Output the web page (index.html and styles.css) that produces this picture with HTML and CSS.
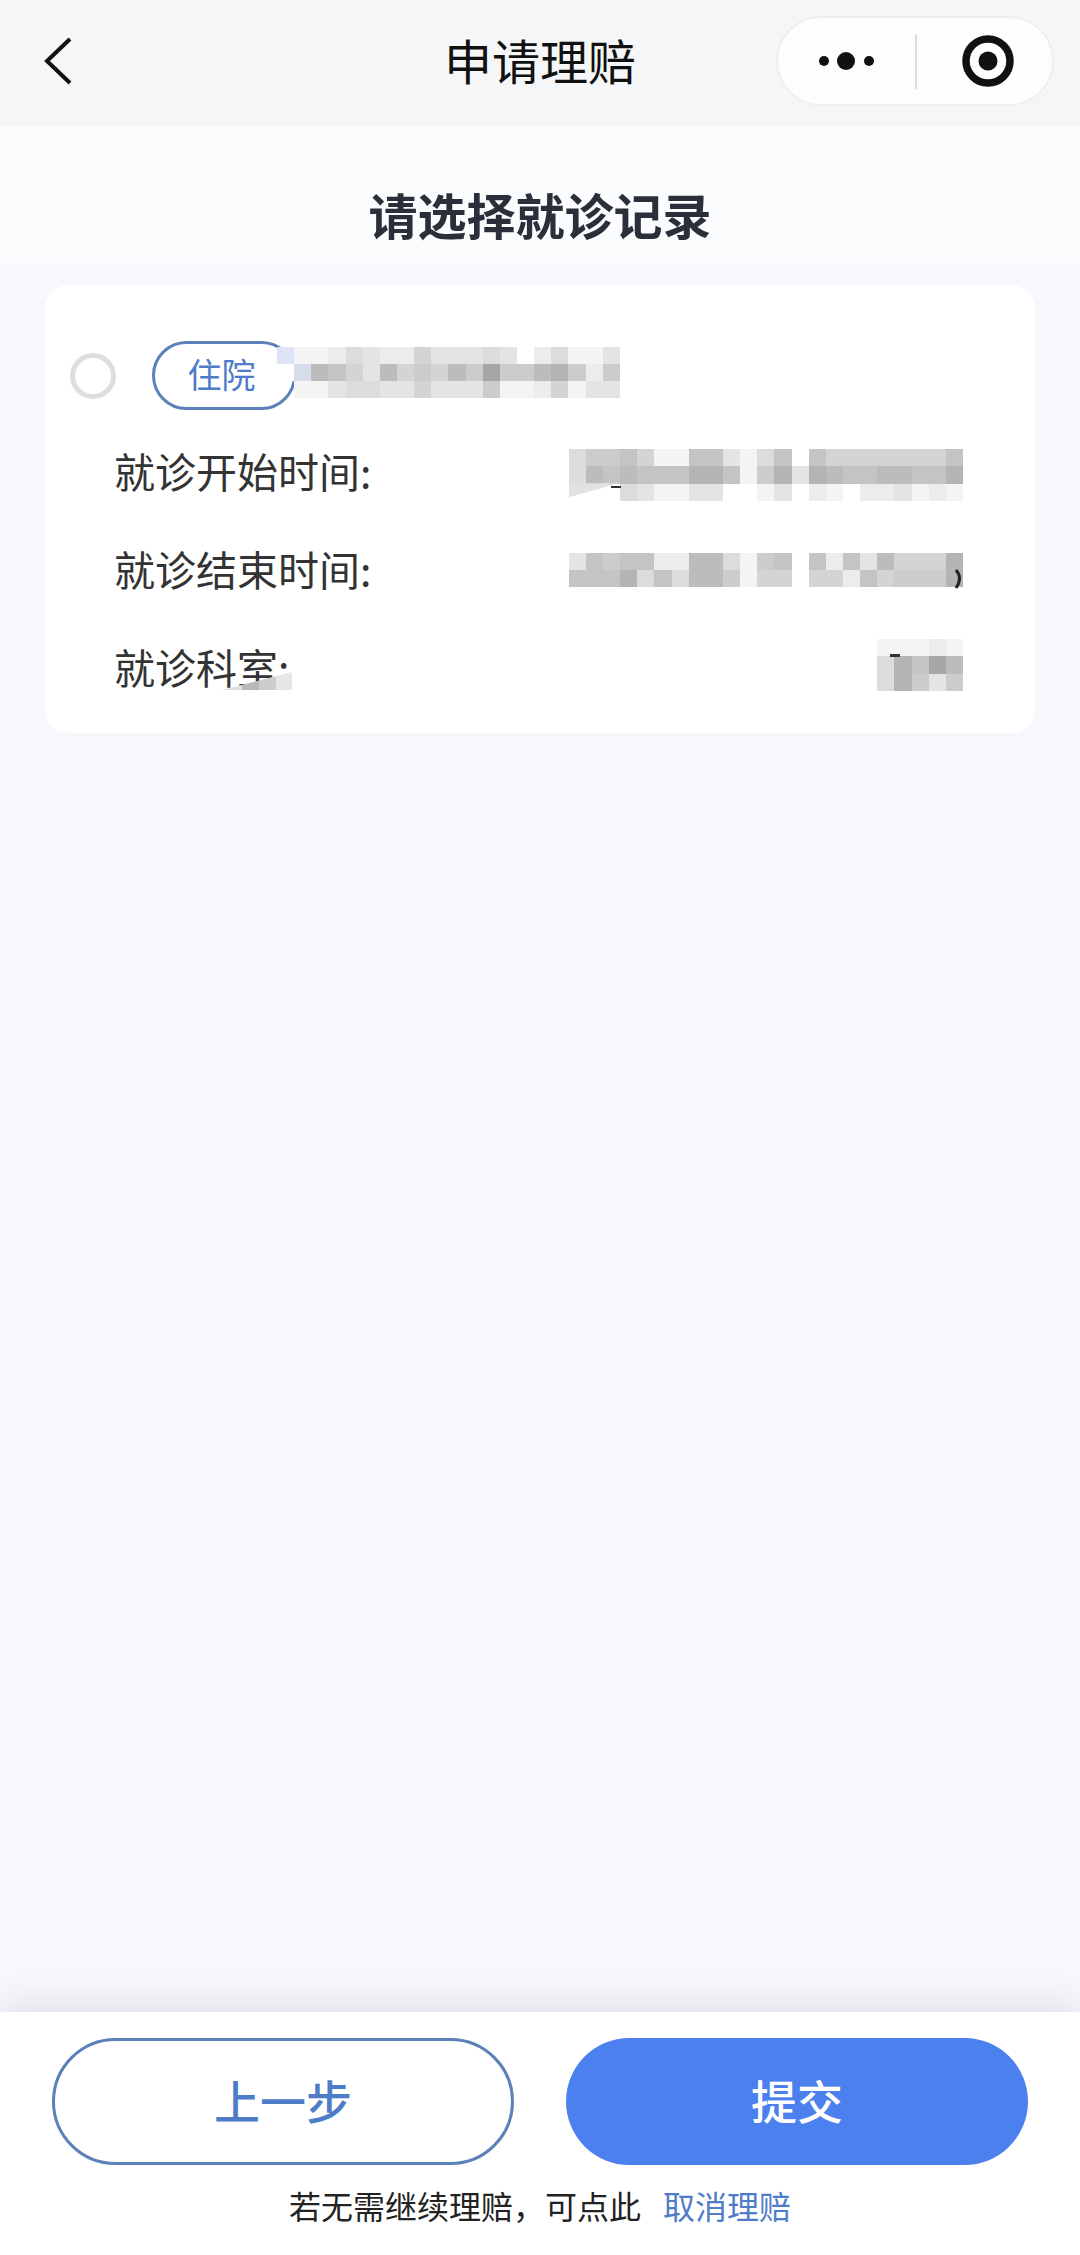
FILE: index.html
```html
<!DOCTYPE html>
<html lang="zh-CN">
<head>
  <meta charset="UTF-8" />
  <meta name="viewport" content="width=device-width, initial-scale=1.0"/>
  <title>申请理赔</title>
  <link rel="stylesheet" href="styles.css">
</head>
<body>

  <header class="nav">
    <svg class="back" width="30" height="50" viewBox="0 0 30 50">
      <polyline points="27,3 4,25 27,47" fill="none" stroke="#111" stroke-width="4"/>
    </svg>
    <div class="nav-title">申请理赔</div>
    <div class="capsule">
      <div class="capsule-cell capsule-more">
        <svg width="60" height="24" viewBox="0 0 60 24">
          <circle cx="7" cy="12" r="5" fill="#111"/>
          <circle cx="29" cy="12" r="9" fill="#111"/>
          <circle cx="52" cy="12" r="5" fill="#111"/>
        </svg>
      </div>
      <div class="capsule-line"></div>
      <div class="capsule-cell capsule-target">
        <svg width="54" height="54" viewBox="0 0 54 54">
          <circle cx="27" cy="27" r="22" fill="none" stroke="#111" stroke-width="7.5"/>
          <circle cx="27" cy="27" r="9.5" fill="#111"/>
        </svg>
      </div>
    </div>
  </header>

  <main class="page">
    <h1 class="page-title">请选择就诊记录</h1>

    <section class="card">
      <div class="card-head">
        <span class="radio"></span>
        <span class="tag">住院</span>
        <div class="mosaic mosaic-name">
          <i class="lav"></i><i class="g10"></i><i class="g10"></i><i class="g9"></i><i class="g7"></i><i class="g8"></i><i class="g9"></i><i class="g9"></i><i class="g6"></i><i class="g8"></i><i class="g8"></i><i class="g8"></i><i class="g7"></i><i class="g8"></i><i></i><i class="g9"></i><i class="g7"></i><i class="g10"></i><i class="g10"></i><i class="g8"></i>
          <i class="wht"></i><i class="lav2"></i><i class="g3"></i><i class="g4"></i><i class="g6"></i><i class="g8"></i><i class="g3"></i><i class="g6"></i><i class="g5"></i><i class="g6"></i><i class="g3"></i><i class="g5"></i><i class="g1"></i><i class="g5"></i><i class="g5"></i><i class="g3"></i><i class="g2"></i><i class="g5"></i><i class="g9"></i><i class="g5"></i>
          <i></i><i class="g10"></i><i class="g10"></i><i class="g8"></i><i class="g7"></i><i class="g7"></i><i class="g8"></i><i class="g8"></i><i class="g6"></i><i class="g8"></i><i class="g8"></i><i class="g8"></i><i class="g5"></i><i class="g10"></i><i class="g10"></i><i class="g9"></i><i class="g6"></i><i class="g10"></i><i class="g8"></i><i class="g8"></i>
        </div>
      </div>

      <div class="row row-start">
        <span class="label">就诊开始时间:</span>
        <div class="mosaic mosaic-time">
          <i class="g7"></i><i class="g5"></i><i class="g5"></i><i class="g4"></i><i class="g6"></i><i class="g10"></i><i class="g10"></i><i class="g4"></i><i class="g4"></i><i class="g8"></i><i class="g10"></i><i class="g7"></i><i class="g4"></i><i></i><i class="g4"></i><i class="g6"></i><i class="g6"></i><i class="g6"></i><i class="g6"></i><i class="g6"></i><i class="g6"></i><i class="g6"></i><i class="g4"></i>
          <i class="g7"></i><i class="g3"></i><i class="g4"></i><i class="g3"></i><i class="g4"></i><i class="g4"></i><i class="g4"></i><i class="g2"></i><i class="g2"></i><i class="g4"></i><i class="g10"></i><i class="g5"></i><i class="g2"></i><i class="g8"></i><i class="g2"></i><i class="g3"></i><i class="g4"></i><i class="g4"></i><i class="g3"></i><i class="g3"></i><i class="g4"></i><i class="g4"></i><i class="g2"></i>
          <i></i><i></i><i></i><i class="g7"></i><i class="g8"></i><i class="g10"></i><i class="g10"></i><i class="g8"></i><i class="g8"></i><i></i><i></i><i class="g10"></i><i class="g8"></i><i></i><i class="g9"></i><i class="g10"></i><i></i><i class="g9"></i><i class="g9"></i><i class="g8"></i><i class="g10"></i><i class="g9"></i><i class="g10"></i>
          <span class="wedge"></span>
          <span class="mark mark-start"></span>
        </div>
      </div>

      <div class="row">
        <span class="label">就诊结束时间:</span>
        <div class="mosaic mosaic-time">
          <i class="g8"></i><i class="g4"></i><i class="g5"></i><i class="g4"></i><i class="g4"></i><i class="g9"></i><i class="g9"></i><i class="g3"></i><i class="g3"></i><i class="g7"></i><i class="g10"></i><i class="g5"></i><i class="g4"></i><i></i><i class="g4"></i><i class="g9"></i><i class="g4"></i><i class="g8"></i><i class="g3"></i><i class="g6"></i><i class="g6"></i><i class="g6"></i><i class="g2"></i>
          <i class="g4"></i><i class="g4"></i><i class="g4"></i><i class="g2"></i><i class="g7"></i><i class="g4"></i><i class="g7"></i><i class="g3"></i><i class="g3"></i><i class="g5"></i><i class="g10"></i><i class="g6"></i><i class="g6"></i><i></i><i class="g6"></i><i class="g6"></i><i class="g9"></i><i class="g4"></i><i class="g6"></i><i class="g5"></i><i class="g5"></i><i class="g5"></i><i class="g2"></i>
          <svg class="paren" width="10" height="20" viewBox="0 0 10 20">
            <path d="M2 1 Q9 9 2 19" fill="none" stroke="#222" stroke-width="3"/>
          </svg>
        </div>
      </div>

      <div class="row row-dept">
        <span class="label">就诊科室:</span>
        <span class="smudge"></span>
        <div class="mosaic mosaic-dept">
          <i class="g10"></i><i class="g10"></i><i class="g10"></i><i class="g9"></i><i class="g10"></i>
          <i class="g7"></i><i class="g2"></i><i class="g4"></i><i class="g1"></i><i class="g3"></i>
          <i class="g7"></i><i class="g2"></i><i class="g5"></i><i class="g8"></i><i class="g5"></i>
          <span class="mark mark-dept"></span>
        </div>
      </div>
    </section>
  </main>

  <footer class="bar">
    <div class="bar-btns">
      <button class="btn btn-line">上一步</button>
      <button class="btn btn-fill">提交</button>
    </div>
    <p class="bar-note">若无需继续理赔，可点此<a class="bar-link">取消理赔</a></p>
  </footer>

</body>
</html>
```

FILE: styles.css
```css
body {
  margin: 0;
  width: 1080px;
  height: 2255px;
  display: flex;
  flex-direction: column;
  font-family: "Noto Sans CJK SC", "Noto Sans", sans-serif;
  background: #f6f8fd;
  color: #333;
  overflow: hidden;
}

/* Top bar */
.nav {
  height: 126px;
  flex: none;
  display: grid;
  grid-template-columns: 1fr auto 1fr;
  align-items: center;
  background: #f5f6f8;
}

.back {
  margin-left: 43px;
  margin-top: -4px;
}

.nav-title {
  font-size: 48px;
  color: #111;
  margin-top: -9px;
}

.capsule {
  justify-self: end;
  margin-right: 26px;
  margin-top: -4px;
  width: 278px;
  height: 90px;
  box-sizing: border-box;
  display: flex;
  align-items: center;
  background: #fdfdfe;
  border: 2px solid #eeeff1;
  border-radius: 45px;
}

.capsule-cell {
  display: flex;
  justify-content: center;
}

.capsule-more {
  width: 137px;
}

.capsule-target {
  flex: 1;
  padding-left: 7px;
}

.capsule-line {
  width: 2px;
  height: 55px;
  background: #dcdcdc;
}

/* Page */
.page {
  flex: 1;
}

.page-title {
  margin: 0;
  height: 137px;
  padding-top: 52px;
  box-sizing: border-box;
  text-align: center;
  font-size: 49px;
  line-height: 72px;
  font-weight: 700;
  color: #2b2f3a;
  background: #fbfcfe;
}

.card {
  margin: 22px 45px 0;
  padding: 56px 72px 14px 25px;
  height: 448px;
  box-sizing: border-box;
  background: #fff;
  border-radius: 24px;
}

.card-head {
  display: flex;
  align-items: center;
}

.radio {
  width: 46px;
  height: 46px;
  box-sizing: border-box;
  border: 5px solid #dedede;
  border-radius: 50%;
  margin-right: 36px;
}

.tag {
  width: 144px;
  height: 69px;
  box-sizing: border-box;
  border: 3px solid #5c80b8;
  border-radius: 35px;
  padding-right: 5px;
  text-align: center;
  font-size: 34px;
  line-height: 60px;
  color: #4f7cc8;
}

/* Blurred-out values */
.mosaic {
  position: relative;
  display: grid;
  grid-auto-rows: 17.15px;
}

.mosaic i {
  display: block;
  filter: blur(0.4px);
}

.mosaic-name {
  grid-template-columns: repeat(20, 17.15px);
  margin-left: -19px;
  margin-top: -6px;
}

.mosaic-time {
  grid-template-columns: repeat(23, 17.15px);
}

.mosaic-dept {
  grid-template-columns: repeat(5, 17.15px);
  margin-top: -6px;
}

.g1 { background: #a6a6a6; }
.g2 { background: #b4b4b4; }
.g3 { background: #bcbcbc; }
.g4 { background: #c4c4c4; }
.g5 { background: #cccccc; }
.g6 { background: #d4d4d4; }
.g7 { background: #dcdcdc; }
.g8 { background: #e4e4e4; }
.g9 { background: #ececec; }
.g10 { background: #f4f4f4; }
.lav { background: #dfe3f6; }
.lav2 { background: #d6dcea; }
.wht { background: #fff; }

.wedge {
  position: absolute;
  left: 0;
  top: 34px;
  width: 50px;
  height: 14px;
  background: #e2e2e2;
  clip-path: polygon(0 0, 100% 0, 0 100%);
}

.mark {
  position: absolute;
  height: 2px;
  background: #333;
}

.mark-start {
  left: 42px;
  top: 37px;
  width: 10px;
}

.mark-dept {
  left: 13px;
  top: 15px;
  width: 10px;
  height: 3px;
}

.paren {
  position: absolute;
  right: -1px;
  top: 16px;
}

.row {
  position: relative;
  height: 98px;
  display: flex;
  justify-content: space-between;
  align-items: center;
  padding-left: 44px;
}

.row-start {
  margin-top: 13px;
}

.row-start .mosaic {
  margin-top: 6px;
}

.label {
  font-size: 41px;
  color: #333;
  margin-top: -4px;
}

.smudge {
  position: absolute;
  left: 152px;
  top: 53px;
  width: 70px;
  height: 18px;
  background: linear-gradient(to right, #e0e0e0 0 20px, #b8b8b8 20px 37px, #cccccc 37px 54px, #e6e6e6 54px);
  clip-path: polygon(0 100%, 100% 0, 100% 100%);
}

/* Bottom bar */
.bar {
  height: 243px;
  flex: none;
  background: #fff;
  box-shadow: 0 -10px 34px rgba(0, 0, 0, 0.09);
  padding: 26px 52px 0;
  box-sizing: border-box;
}

.bar-btns {
  display: flex;
  justify-content: space-between;
}

.btn {
  width: 462px;
  height: 127px;
  box-sizing: border-box;
  border-radius: 64px;
  padding: 0 0 6px;
  font-family: inherit;
  font-size: 46px;
  font-weight: 500;
}

.btn-line {
  background: #fff;
  border: 3px solid #5c80b8;
  color: #4f7cc8;
}

.btn-fill {
  background: #4b80ee;
  border: none;
  color: #fff;
}

.bar-note {
  margin: 17px 0 0;
  text-align: center;
  font-size: 32px;
  line-height: 46px;
  color: #222;
}

.bar-link {
  margin-left: 22px;
  color: #4f7cc8;
}
```
